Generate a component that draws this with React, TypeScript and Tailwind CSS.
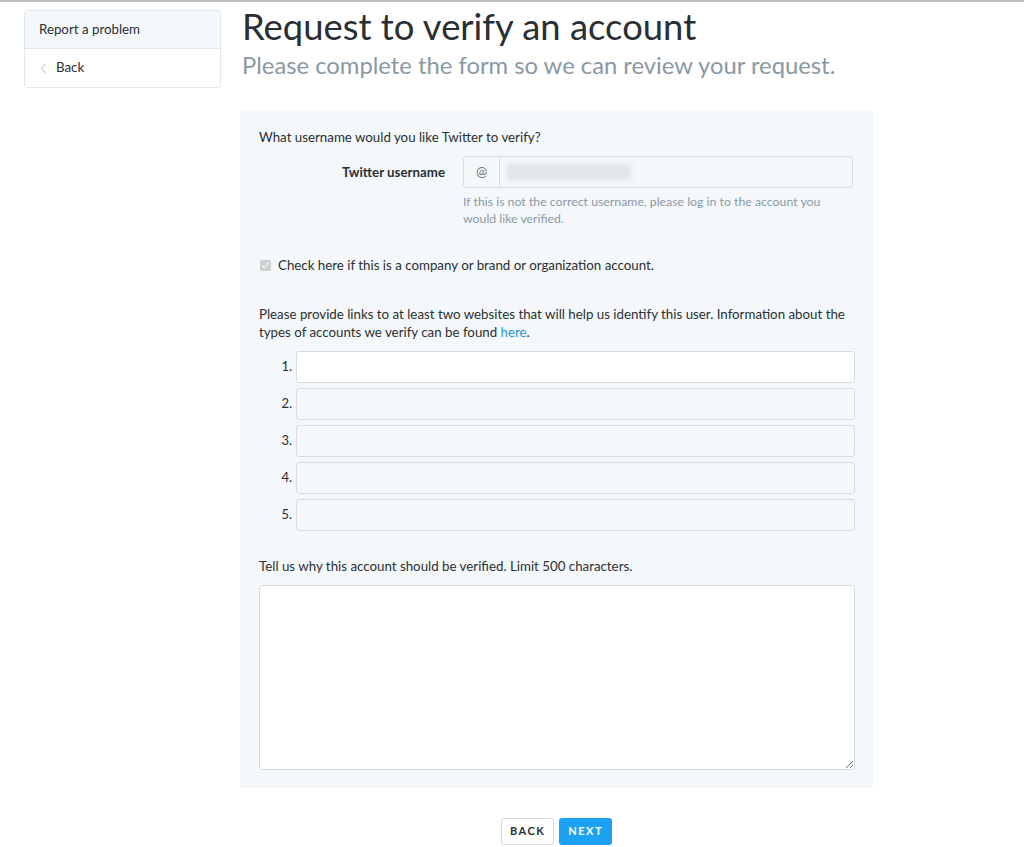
import { useState } from 'react'

const font = { fontFamily: 'Lato, "Liberation Sans", sans-serif' }

const App = () => {
  const [company, setCompany] = useState(true)
  const [links, setLinks] = useState(['', '', '', '', ''])
  const [reason, setReason] = useState('')

  return (
    <div className="min-h-[847px] bg-white border-t-2 border-[#bdbdbd] text-[#292f33]" style={font}>
      <div className="flex items-start">
        {/* side nav */}
        <div className="ml-[24px] mt-[8px] w-[197px] border border-[#e1e8ed] rounded-[3px] text-[13.3px]">
          <div className="h-[38px] flex items-center px-[14px] bg-[#f5f8fa] border-b border-[#e1e8ed]">
            Report a problem
          </div>
          <div className="h-[38px] flex items-center px-[14px] bg-white">
            <svg width="7" height="11" viewBox="0 0 7 11" className="ml-[1px] mr-[9px]">
              <path d="M5.5 1 L1.5 5.5 L5.5 10" fill="none" stroke="#ccd6dd" strokeWidth="1.3" />
            </svg>
            Back
          </div>
        </div>

        <div className="ml-[19px] w-[633px]">
          <h1 className="text-[36.4px] leading-[44px] mt-[2px] ml-[2px] text-[#292f33]">
            Request to verify an account
          </h1>
          <p className="text-[23.8px] leading-[30px] mt-[2px] ml-[2px] text-[#8899a6]">
            Please complete the form so we can review your request.
          </p>

          <form className="mt-[30px] bg-[#f5f8fa] rounded-[3px] pl-[19px] pr-[18px] pt-[18px] pb-[18px] text-[13.3px]">
            <p className="leading-[18px]">What username would you like Twitter to verify?</p>

            <div className="flex mt-[10px]">
              <div className="w-[204px] pr-[18px] text-right font-bold leading-[32px]">Twitter username</div>
              <div className="flex-1">
                <div className="flex h-[32px] w-[390px] border border-[#d5dde3] rounded-[3px] bg-[#f5f8fa]">
                  <div className="w-[36px] flex items-center justify-center border-r border-[#d5dde3] text-[#66757f]">@</div>
                  <div className="flex-1 flex items-center pl-[6px]">
                    <div className="h-[18px] w-[125px] bg-[#e4e7ea] blur-[2px]"></div>
                  </div>
                </div>
                <p className="mt-[5px] text-[12.3px] leading-[17px] text-[#8899a6] w-[380px]">
                  If this is not the correct username, please log in to the account you would like verified.
                </p>
              </div>
            </div>

            <label className="flex items-center mt-[29px] leading-[18px]">
              <input
                type="checkbox"
                checked={company}
                onChange={(e) => setCompany(e.target.checked)}
                disabled
                className="w-[11px] h-[11px] ml-[1px] mr-[7px]"
              />
              Check here if this is a company or brand or organization account.
            </label>

            <p className="mt-[31px] leading-[18px]">
              Please provide links to at least two websites that will help us identify this user. Information about the
              types of accounts we verify can be found <a href="#" className="text-[#1b95e0]">here</a>.
            </p>

            <div className="mt-[10px] flex flex-col gap-[5px]">
              {links.map((val, i) => (
                <div key={i} className="flex items-center">
                  <span className="w-[37px] text-right pr-[4px] text-[13px]">{i + 1}.</span>
                  <input
                    type="text"
                    value={val}
                    disabled={i > 0}
                    onChange={(e) => {
                      const next = [...links]
                      next[i] = e.target.value
                      setLinks(next)
                    }}
                    className={
                      i === 0
                        ? 'flex-1 h-[32px] border border-[#d5dde3] rounded-[3px] bg-white px-2 outline-none'
                        : 'flex-1 h-[32px] border border-[#d5dde3] rounded-[3px] bg-[#f5f8fa] px-2 outline-none'
                    }
                  />
                </div>
              ))}
            </div>

            <p className="mt-[26px] leading-[18px]">Tell us why this account should be verified. Limit 500 characters.</p>
            <textarea
              value={reason}
              onChange={(e) => setReason(e.target.value)}
              maxLength={500}
              className="mt-[10px] block w-full h-[185px] border border-[#d5dde3] rounded-[3px] bg-white p-2 outline-none"
            ></textarea>
          </form>

          <div className="flex justify-center gap-[5px] mt-[30px]">
            <button className="h-[27px] px-[8px] border border-[#d5dde3] rounded-[3px] bg-white text-[11px] font-bold tracking-[1.5px] text-[#292f33]">
              BACK
            </button>
            <button className="h-[27px] px-[9px] rounded-[3px] bg-[#1da1f2] text-[11px] font-bold tracking-[1.5px] text-white">
              NEXT
            </button>
          </div>
        </div>
      </div>
    </div>
  )
}

export default App
